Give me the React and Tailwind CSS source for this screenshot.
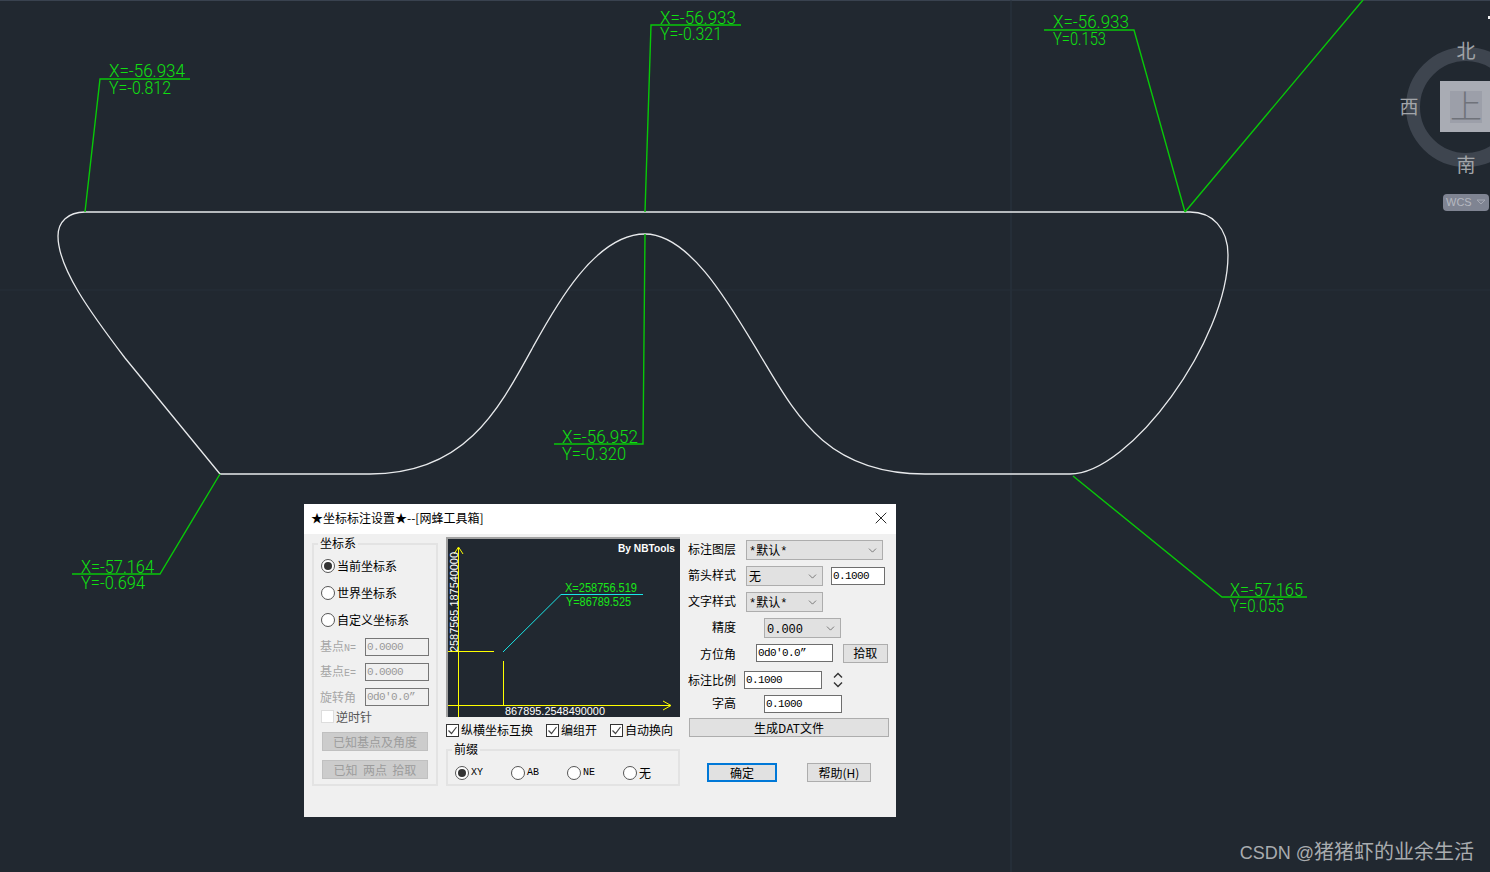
import React from 'react';
import { X, ChevronDown } from 'lucide-react';

const CJK = "font-['Noto_Sans_CJK_SC',sans-serif]";
const MONO = "font-['Liberation_Mono','Noto_Sans_CJK_SC',monospace]";

// leader line + the two coordinate texts, everything in page coords
const leaders = [
  { pts: '85,212 100,79 190,79', x: 109, y1: 77, y2: 94, xText: 'X=-56.934', yText: 'Y=-0.812', w1: 76, w2: 62 },
  { pts: '645,212 651,25 741,25', x: 660, y1: 24, y2: 40, xText: 'X=-56.933', yText: 'Y=-0.321', w1: 76, w2: 62 },
  { pts: '1185,212 1134,30 1044,30', x: 1053, y1: 28, y2: 45, xText: 'X=-56.933', yText: 'Y=0.153', w1: 76, w2: 53 },
  { pts: '645,234 643,444 554,444', x: 562, y1: 443, y2: 460, xText: 'X=-56.952', yText: 'Y=-0.320', w1: 76, w2: 64 },
  { pts: '220,474 160,574 72,574', x: 81, y1: 573, y2: 589, xText: 'X=-57.164', yText: 'Y=-0.694', w1: 73, w2: 64 },
  { pts: '1073,476 1222,597 1307,597', x: 1230, y1: 596, y2: 612, xText: 'X=-57.165', yText: 'Y=0.055', w1: 73, w2: 54 },
];

function CadCanvas() {
  return (
    <svg className="absolute inset-0" width="1490" height="872" viewBox="0 0 1490 872" fill="none">
      <path d="M0 0.5H1490" stroke="#39424f" />
      <path d="M1011 0V872" stroke="#2b3440" />
      <path d="M0 290H1490" stroke="#262e38" />
      <path
        d="M85 212H1190C1212 212 1228 228 1228 255C1228 340 1130 474 1070 474H925C825 474 795 413 760 355C730 305 690 234 645 234C595 234 555 307 533 347C498 411 465 474 370 474H220L125 358C90 312 58 268 58 236C58 222 68 212 85 212Z"
        stroke="#e8eaec"
        strokeWidth="1.3"
      />
      <path d="M1185 212L1363 0" stroke="#08c808" strokeWidth="1.4" />
      {leaders.map((l) => (
        <g key={l.xText + l.x}>
          <polyline points={l.pts} stroke="#08c808" strokeWidth="1.4" />
          <text x={l.x} y={l.y1} fill="#10e010" fontFamily="Roboto" fontWeight="300" fontSize="19" textLength={l.w1} lengthAdjust="spacingAndGlyphs">{l.xText}</text>
          <text x={l.x} y={l.y2} fill="#10e010" fontFamily="Roboto" fontWeight="300" fontSize="19" textLength={l.w2} lengthAdjust="spacingAndGlyphs">{l.yText}</text>
        </g>
      ))}

      {/* view cube */}
      <circle cx="1466" cy="107" r="53" stroke="#3e454f" strokeWidth="14" />
      <rect x="1440" y="81" width="50" height="51" fill="#a9acb4" />
      <rect x="1450" y="91" width="32" height="32" fill="#9c9fa9" />
      <text x="1466" y="118" textAnchor="middle" fill="#6f727a" fontFamily="Noto Sans CJK SC" fontSize="32" fontWeight="300">上</text>
      <g fill="#a2a5a9" fontFamily="Noto Sans CJK SC" fontSize="19" textAnchor="middle">
        <text x="1466" y="58">北</text>
        <text x="1466" y="172">南</text>
        <text x="1409" y="114">西</text>
      </g>
      <rect x="1443" y="194" width="46" height="17" rx="4" fill="#7f8492" />
      <text x="1446" y="206" fill="#b5b8c0" fontFamily="Liberation Sans" fontSize="11">WCS</text>
      <path d="M1477 200h8l-4 4z" stroke="#a5a8b2" />
      <rect x="1488" y="16" width="2" height="3" fill="#f2f2f2" />
    </svg>
  );
}

function Preview() {
  return (
    <div className="h-[180px] border-t-2 border-l-2 border-[#a0a0a0] bg-[#212830]">
      <svg width="232" height="178" viewBox="448 539 232 178" fill="none">
        <g stroke="#ffff00">
          <path d="M458.5 548V717M448 705.5H670M448 651.5H494M503.5 661V705" />
          <path d="M454 554L458.5 547L463 554M663 701L671 705.5L663 710" />
        </g>
        <path d="M503 652L561 594.5H643" stroke="#19e6e6" />
        <text x="565" y="592" fill="#19e619" fontFamily="Liberation Sans" fontSize="12" textLength="72" lengthAdjust="spacingAndGlyphs">X=258756.519</text>
        <text x="566" y="606" fill="#19e619" fontFamily="Liberation Sans" fontSize="12" textLength="65" lengthAdjust="spacingAndGlyphs">Y=86789.525</text>
        <text x="618" y="552" fill="#ffffff" fontFamily="Liberation Sans" fontSize="11" fontWeight="700" textLength="57" lengthAdjust="spacingAndGlyphs">By NBTools</text>
        <text x="505" y="715" fill="#ffffff" fontFamily="Liberation Sans" fontSize="11" textLength="100" lengthAdjust="spacingAndGlyphs">867895.2548490000</text>
        <text transform="translate(458 652) rotate(-90)" fill="#ffffff" fontFamily="Liberation Sans" fontSize="11" textLength="100" lengthAdjust="spacingAndGlyphs">2587565.187540000</text>
      </svg>
    </div>
  );
}

function Radio({ checked, children, className = '' }) {
  return (
    <div className={`flex items-center gap-[2px] ${className}`}>
      <span className="flex h-[14px] w-[14px] items-center justify-center rounded-full border border-[#555] bg-white">
        {checked && <span className="h-[8px] w-[8px] rounded-full bg-[#333]" />}
      </span>
      {children}
    </div>
  );
}

function Check({ children, className = '' }) {
  return (
    <div className={`flex items-center gap-[2px] ${className}`}>
      <span className="flex h-[13px] w-[13px] items-center justify-center border border-[#333] bg-white">
        <svg width="11" height="11" viewBox="0 0 11 11" fill="none">
          <path d="M1.5 5.5L4.5 8.5L9.5 2" stroke="#444" strokeWidth="1.2" />
        </svg>
      </span>
      {children}
    </div>
  );
}

function Group({ title, className = '', children }) {
  return (
    <div className={`relative border-2 border-[#e3e3e3] ${className}`}>
      <span className="absolute -top-[9px] left-[4px] bg-[#f0f0f0] px-[2px] leading-[14px]">{title}</span>
      {children}
    </div>
  );
}

function Field({ value, className = '', disabled }) {
  return (
    <div
      className={`flex h-[18px] items-center border px-[1px] ${MONO} text-[11px] tracking-[-0.6px] ${
        disabled ? 'border-[#767676] text-[#9a9a9a]' : 'border-[#6e6e6e] bg-white text-black'
      } ${className}`}
    >
      {value}
    </div>
  );
}

function Combo({ value, className = '' }) {
  return (
    <div className={`flex h-[20px] items-center justify-between border border-[#adadad] bg-[#e1e1e1] pl-[2px] pr-[3px] ${MONO} text-[12px] ${className}`}>
      <span className="pt-[3px]">{value}</span>
      <ChevronDown size={13} strokeWidth={1.2} color="#444" />
    </div>
  );
}

function Btn({ children, className = '', primary }) {
  return (
    <div
      className={`flex h-[19px] items-center justify-center bg-[#e1e1e1] ${
        primary ? 'border-2 border-[#0078d7]' : 'border border-[#adadad]'
      } ${className}`}
    >
      {children}
    </div>
  );
}

function DisabledBtn({ children }) {
  return (
    <div className="ml-[8px] flex h-[19px] w-[106px] items-center justify-center whitespace-pre border border-[#c0c0c0] bg-[#cccccc] text-[#9c9c9c]">
      {children}
    </div>
  );
}

function Row({ label, children, className = '', labelClass = 'pb-[3px]' }) {
  return (
    <div className={`flex h-[20px] items-center ${className}`}>
      <span className={`w-[49px] shrink-0 text-right ${labelClass}`}>{label}</span>
      {children}
    </div>
  );
}

function Dialog() {
  return (
    <div className={`absolute left-[304px] top-[504px] h-[313px] w-[592px] bg-[#f0f0f0] text-[12px] leading-none text-black ${CJK}`}>
      <div className="flex h-[30px] items-center justify-between bg-white pb-[2px] pl-[7px] pr-[5px]">
        <span>★坐标标注设置★--[网蜂工具箱]</span>
        <X size={20} strokeWidth={1} />
      </div>

      <div className="flex px-[8px]">
        {/* left column */}
        <Group title="坐标系" className="mt-[9px] h-[243px] w-[126px]">
          <div className="flex flex-col pl-[7px] pt-[7px]">
            <Radio checked className="h-[27px]">当前坐标系</Radio>
            <Radio className="h-[27px]">世界坐标系</Radio>
            <Radio className="h-[27px]">自定义坐标系</Radio>
          </div>
          <div className="mt-[5px] flex flex-col gap-[7px] pl-[6px] text-[#a6a6a6]">
            <div className="flex items-center">
              <span className="w-[45px]">基点<span className={`${MONO} text-[10px]`}>N=</span></span>
              <Field disabled value="0.0000" className="w-[64px]" />
            </div>
            <div className="flex items-center">
              <span className="w-[45px]">基点<span className={`${MONO} text-[10px]`}>E=</span></span>
              <Field disabled value="0.0000" className="w-[64px]" />
            </div>
            <div className="flex items-center">
              <span className="w-[45px]">旋转角</span>
              <Field disabled value="0d0'0.0”" className="w-[64px]" />
            </div>
          </div>
          <div className="mt-[4px] flex items-center gap-[2px] pl-[7px] text-[#555]">
            <span className="h-[13px] w-[13px] border border-[#ddd] bg-white" />
            逆时针
          </div>
          <div className="mt-[9px] flex flex-col gap-[9px]">
            <DisabledBtn>已知基点及角度</DisabledBtn>
            <DisabledBtn>已知  两点  拾取</DisabledBtn>
          </div>
        </Group>

        {/* preview column */}
        <div className="ml-[8px] w-[234px] pt-[3px]">
          <Preview />
          <div className="mt-[6px] flex h-[14px] items-center">
            <Check className="w-[100px]">纵横坐标互换</Check>
            <Check className="w-[64px]">编组开</Check>
            <Check>自动换向</Check>
          </div>
          <Group title="前缀" className="mt-[12px] h-[37px]">
            <div className={`flex items-center pl-[7px] pt-[15px] ${MONO} text-[10px]`}>
              <Radio checked className="w-[56px]">XY</Radio>
              <Radio className="w-[56px]">AB</Radio>
              <Radio className="w-[56px]">NE</Radio>
              <Radio className={`${CJK} text-[12px]`}>无</Radio>
            </div>
          </Group>
        </div>

        {/* settings column */}
        <div className="ml-[7px] w-[201px] pt-[6px]">
          <Row label="标注图层">
            <Combo value="*默认*" className="ml-[10px] w-[137px]" />
          </Row>
          <Row label="箭头样式" className="mt-[6px]">
            <Combo value="无" className="ml-[10px] w-[77px]" />
            <Field value="0.1000" className="ml-[8px] w-[54px]" />
          </Row>
          <Row label="文字样式" className="mt-[6px]">
            <Combo value="*默认*" className="ml-[10px] w-[77px]" />
          </Row>
          <Row label="精度" className="mt-[6px]">
            <Combo value="0.000" className="ml-[28px] w-[77px]" />
          </Row>
          <Row label="方位角" className="mt-[5px]" labelClass="pt-[2px]">
            <Field value="0d0'0.0”" className="ml-[20px] w-[78px]" />
            <Btn className="ml-[10px] w-[46px]">拾取</Btn>
          </Row>
          <Row label="标注比例" className="mt-[7px]" labelClass="">
            <Field value="0.1000" className="ml-[8px] w-[78px]" />
            <svg className="ml-[8px]" width="16" height="18" viewBox="0 0 16 18" fill="none">
              <path d="M4 6.5L8 2.5L12 6.5M4 11.5L8 15.5L12 11.5" stroke="#333" strokeWidth="1.4" />
            </svg>
          </Row>
          <Row label="字高" className="mt-[4px]" labelClass="pb-[3px]">
            <Field value="0.1000" className="ml-[28px] w-[78px]" />
          </Row>
          <Btn className="ml-[2px] mt-[4px] w-[200px]">生成DAT文件</Btn>
          <div className="mt-[26px] flex">
            <Btn primary className="ml-[20px] w-[70px]">确定</Btn>
            <Btn className="ml-[30px] w-[64px]">帮助(H)</Btn>
          </div>
        </div>
      </div>
    </div>
  );
}

export default function App() {
  return (
    <div className="relative h-[872px] w-[1490px] overflow-hidden bg-[#212830]">
      <CadCanvas />
      <Dialog />
      <span className={`absolute bottom-[10px] right-[16px] text-[20px] leading-none text-[#a9acaf] ${CJK}`}>
        <span className="font-['Liberation_Sans'] text-[18px]">CSDN @</span>猪猪虾的业余生活
      </span>
    </div>
  );
}
